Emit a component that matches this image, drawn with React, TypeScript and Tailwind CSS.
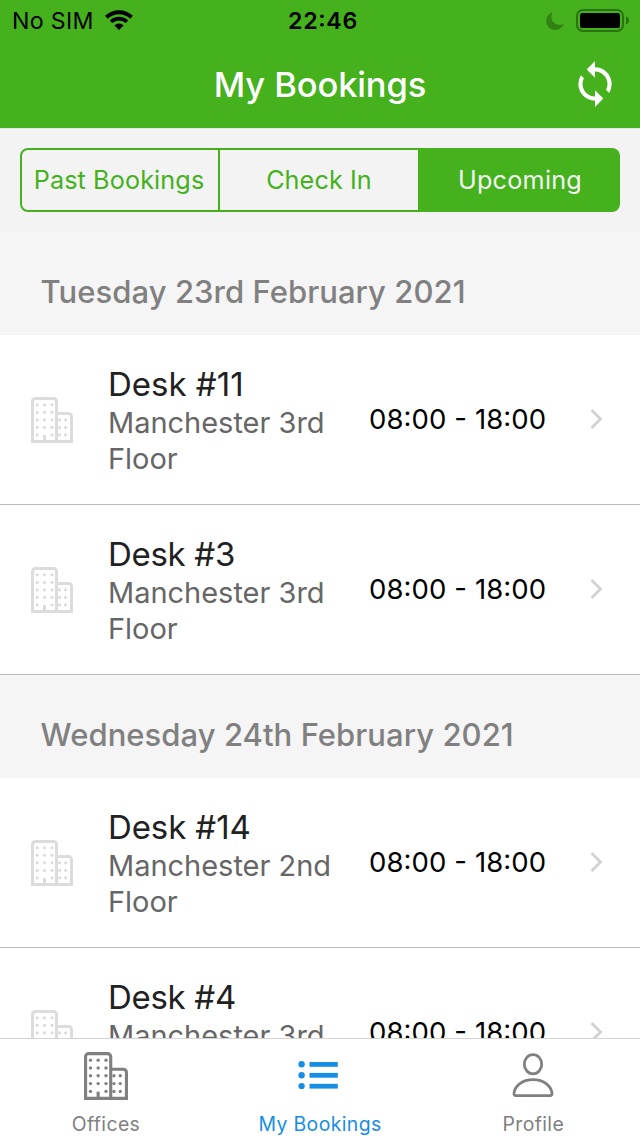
import { MdSync } from "react-icons/md";

type Booking = { desk: string; place: string; time: string; deskClass: string };
type Section = { title: string; bookings: Booking[] };

const TIME = "08:00 - 18:00";

const SECTIONS: Section[] = [
  {
    title: "Tuesday 23rd February 2021",
    bookings: [
      { desk: "Desk #11", place: "Manchester 3rd Floor", time: TIME, deskClass: "tracking-normal" },
      { desk: "Desk #3", place: "Manchester 3rd Floor", time: TIME, deskClass: "tracking-[-0.3px]" },
    ],
  },
  {
    title: "Wednesday 24th February 2021",
    bookings: [
      { desk: "Desk #14", place: "Manchester 2nd Floor", time: TIME, deskClass: "tracking-[-0.1px]" },
      { desk: "Desk #4", place: "Manchester 3rd Floor", time: TIME, deskClass: "tracking-[-0.3px]" },
    ],
  },
];

const LEFT_DOTS_X = [6.2, 13.5, 21];
const RIGHT_DOTS_X = [28.6, 34.6];
const DOTS_Y = [7.8, 15.3, 22.8, 30.3, 37.8];

function BuildingIcon({ className }: { className: string }) {
  return (
    <svg viewBox="0 0 42 46" preserveAspectRatio="none" fill="none" className={className}>
      <path
        d="M1.5 44.4V4.5a3 3 0 0 1 3-3h18a3 3 0 0 1 3 3V46M25.5 16.5H37.5a3 3 0 0 1 3 3V44.4M0 44.4H42"
        stroke="currentColor"
        strokeWidth="3"
      />
      <path d="M13.5 38V44" stroke="currentColor" strokeWidth="3" />
      <g fill="currentColor">
        {DOTS_Y.map((y, row) =>
          LEFT_DOTS_X.filter((_, col) => !(row === 4 && col === 1)).map((x) => (
            <circle key={`l${x}-${y}`} cx={x} cy={y} r="1.6" />
          )),
        )}
        {DOTS_Y.slice(2).map((y) =>
          RIGHT_DOTS_X.map((x) => <circle key={`r${x}-${y}`} cx={x} cy={y} r="1.6" />),
        )}
      </g>
    </svg>
  );
}

function WifiIcon() {
  return (
    <svg viewBox="0 0 28 20" className="h-5 w-7" fill="none">
      <path d="M1.4 7.2A18.2 18.2 0 0 1 26.6 7.2" stroke="#000" strokeWidth="4" />
      <path d="M6 11.8A11.6 11.6 0 0 1 22 11.8" stroke="#000" strokeWidth="3.6" />
      <path d="M14 20L9.4 15.4A6.6 6.6 0 0 1 18.6 15.4Z" fill="#000" />
    </svg>
  );
}

function MoonIcon() {
  return (
    <svg viewBox="0 0 18 18" className="h-[18px] w-[18px]">
      <path
        d="M6.6 0.3C3 1.7 0.2 5 0.2 9C0.2 14 4.2 17.9 9.2 17.9C13.2 17.9 16.6 15.3 17.9 11.7C16.8 12.4 15.3 12.8 13.7 12.8C9 12.8 5.4 9.5 5.4 5C5.4 3.2 5.8 1.6 6.6 0.3Z"
        fill="#318214"
      />
    </svg>
  );
}

function BatteryIcon() {
  return (
    <svg viewBox="0 0 53 23" className="h-[23px] w-[53px]">
      <rect x="1" y="1" width="46" height="21" rx="6" fill="none" stroke="#2b7212" strokeWidth="2" />
      <rect x="4" y="4" width="40" height="15" rx="2.5" fill="#000" />
      <path d="M50 7.5C52 8 53 9.7 53 11.5S52 15 50 15.5Z" fill="#2b7212" />
    </svg>
  );
}

function ListIcon() {
  return (
    <svg viewBox="0 0 40 28" className="h-7 w-10" fill="#168ee5">
      {[3.4, 14.3, 25.2].map((y) => (
        <g key={y}>
          <circle cx="3.6" cy={y - 0.1} r="3.2" />
          <rect x="11.5" y={y - 2.4} width="28.3" height="4.8" />
        </g>
      ))}
    </svg>
  );
}

function ProfileIcon() {
  return (
    <svg viewBox="0 0 42 46" className="h-[46px] w-[42px]" fill="none" stroke="#808080" strokeWidth="2.8">
      <ellipse cx="21" cy="12.2" rx="8.7" ry="9.6" />
      <path
        d="M3.6 43.6A1.6 1.6 0 0 1 2 42C2.2 34 10.2 27.6 21 27.6S39.8 34 40 42A1.6 1.6 0 0 1 38.4 43.6Z"
        strokeLinejoin="round"
      />
    </svg>
  );
}

function BookingRow({ booking }: { booking: Booking }) {
  return (
    <li className="flex h-[170px] shrink-0 border-b border-[#bcbbc1] bg-white">
      <div className="w-[108px] pt-[62px] pl-[31px]">
        <BuildingIcon className="h-[46px] w-[42px] text-[#dcdcdc]" />
      </div>
      <div className="w-[260px] pt-[29px]">
        <h3 className={`text-[33px] leading-10 text-[#212121] ${booking.deskClass}`}>{booking.desk}</h3>
        <p className="mt-px w-[230px] text-[29px] leading-9 tracking-[-0.02px] text-[#666666]">{booking.place}</p>
      </div>
      <div className="flex flex-1 items-center justify-between pr-[37px]">
        <span className="pl-px text-[27.5px] tracking-[0.1px] whitespace-nowrap text-black [font-feature-settings:'calt']">
          {booking.time}
        </span>
        <svg viewBox="0 0 13 20" className="mb-0.5 h-5 w-[13px]" fill="none" stroke="#d1d1d6" strokeWidth="2.8">
          <path d="M1.5 1L10.5 10L1.5 19" />
        </svg>
      </div>
    </li>
  );
}

export default function App() {
  return (
    <div className="flex h-[1136px] w-[640px] flex-col overflow-hidden bg-white font-['Inter',sans-serif]">
      <header className="h-[128px] shrink-0 bg-[#44b11d]">
        <div className="grid h-[41px] grid-cols-3 items-center text-[23.2px] leading-none text-black">
          <div className="flex items-center gap-[11px] pl-3">
            <span className="pt-0.5 tracking-[0.3px]">No SIM</span>
            <WifiIcon />
          </div>
          <span className="pt-0.5 pl-1.5 text-center font-semibold tracking-[0.65px] [font-feature-settings:'calt']">
            22:46
          </span>
          <div className="flex items-center justify-end gap-3 pr-[11px]">
            <MoonIcon />
            <BatteryIcon />
          </div>
        </div>
        <div className="grid h-[87px] grid-cols-[80px_1fr_80px] items-center">
          <h1 className="col-start-2 text-center text-[34.5px] font-medium tracking-[-0.12px] text-white">
            My Bookings
          </h1>
          <button className="pb-0.5 pl-2.5" aria-label="Refresh">
            <MdSync className="h-[50px] w-[50px] text-white" />
          </button>
        </div>
      </header>

      <div className="h-[104px] shrink-0 border-t border-[#e4e4e4] bg-[#f3f3f3] px-5 pt-[19px]">
        <div className="flex h-16 text-[25.2px] text-[#44b11d]">
          <button className="w-[200px] rounded-l-[8px] border-2 border-[#44b11d] pt-0.5 pr-0.5 tracking-[0.12px]">
            Past Bookings
          </button>
          <button className="w-[198px] border-y-2 border-[#44b11d] pt-0.5 tracking-[0.1px]">Check In</button>
          <button className="flex-1 rounded-r-[8px] bg-[#44b11d] pt-0.5 pl-0.5 tracking-[0.25px] text-[#f3f3f3]">
            Upcoming
          </button>
        </div>
      </div>

      <main className="min-h-0 flex-1 overflow-hidden">
        {SECTIONS.map((section) => (
          <section key={section.title}>
            <h2 className="flex h-[103px] items-center bg-[#f5f5f5] pt-[18px] pl-[40.6px] text-[31px] font-medium tracking-[0.05px] text-[#808080]">
              {section.title}
            </h2>
            <ul>
              {section.bookings.map((booking) => (
                <BookingRow key={booking.desk} booking={booking} />
              ))}
            </ul>
          </section>
        ))}
      </main>

      <nav className="grid h-[98px] shrink-0 grid-cols-3 border-t border-[#d4d4d4] bg-white text-[19.4px] leading-6 tracking-[0.4px] text-[#808080]">
        <div className="flex flex-col items-center pr-[1.4px]">
          <div className="flex h-[73px] items-center">
            <BuildingIcon className="h-12 w-11" />
          </div>
          <span>Offices</span>
        </div>
        <div className="flex flex-col items-center text-[#168ee5]">
          <div className="flex h-[73px] items-center pr-1 pb-0.5">
            <ListIcon />
          </div>
          <span>My Bookings</span>
        </div>
        <div className="flex flex-col items-center">
          <div className="flex h-[73px] items-center pb-0.5">
            <ProfileIcon />
          </div>
          <span>Profile</span>
        </div>
      </nav>
    </div>
  );
}
